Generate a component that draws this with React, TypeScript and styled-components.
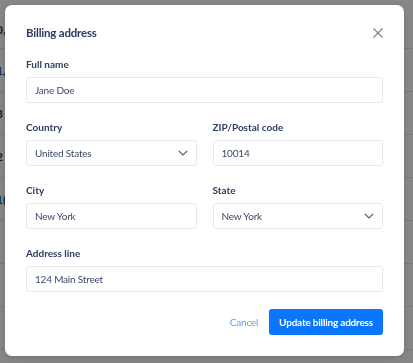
import React from "react";
import styled, { createGlobalStyle } from "styled-components";

const GlobalStyle = createGlobalStyle`
  html, body {
    margin: 0;
    padding: 0;
    background: #ffffff;
    font-family: "Lato", "Liberation Sans", sans-serif;
  }
  * { box-sizing: border-box; }
`;

const Page = styled.div`
  width: 413px;
  height: 363px;
  overflow: hidden;
  background: #ffffff;
`;

const TableRow = styled.div`
  height: 43px;
  display: flex;
  align-items: center;
  border-bottom: 1px solid #e4e6eb;
  margin-left: -4px;
  font-size: 12px;
  font-weight: 700;
  color: #2b3a5c;
  &:first-child {
    height: 49px;
    padding-top: 10px;
  }
`;

const Overlay = styled.div`
  position: fixed;
  inset: 0;
  background: rgba(0, 0, 0, 0.47);
  padding: 5px 9px 0 5px;
`;

const Modal = styled.div`
  width: 399px;
  background: #ffffff;
  border-radius: 7px;
  padding: 18px 21px 21px 21px;
  box-shadow: 0 2px 8px rgba(0, 0, 0, 0.15);
`;

const Header = styled.div`
  display: flex;
  justify-content: space-between;
  align-items: center;
  height: 20px;
  margin-bottom: 12px;
`;

const Title = styled.h2`
  margin: 0;
  font-size: 11.5px;
  line-height: 20px;
  font-weight: 700;
  letter-spacing: -0.2px;
  color: #2b3b5e;
`;

const CloseButton = styled.button`
  border: none;
  background: none;
  padding: 0;
  width: 10px;
  height: 10px;
  display: flex;
  align-items: center;
  justify-content: center;
  cursor: pointer;
`;

const Form = styled.div`
  display: grid;
  grid-template-columns: 1fr 1fr;
  column-gap: 16px;
  row-gap: 15px;
`;

const Field = styled.label<{ $wide?: boolean }>`
  display: flex;
  flex-direction: column;
  gap: 4px;
  grid-column: ${(p) => (p.$wide ? "1 / -1" : "auto")};
`;

const Label = styled.span`
  font-size: 10px;
  line-height: 18px;
  font-weight: 700;
  color: #2c3d5f;
`;

const Box = styled.div`
  height: 26px;
  border: 1px solid #e7e9ee;
  border-radius: 3px;
  padding: 0 8px;
  display: flex;
  align-items: center;
  justify-content: space-between;
  font-size: 10px;
  letter-spacing: -0.2px;
  color: #3b4969;
`;

const Actions = styled.div`
  display: flex;
  justify-content: flex-end;
  align-items: center;
  gap: 11px;
  margin-top: 17px;
`;

const CancelButton = styled.button`
  border: none;
  background: none;
  padding: 0;
  font-family: inherit;
  font-size: 10px;
  letter-spacing: -0.2px;
  color: #5c9bf2;
  cursor: pointer;
`;

const PrimaryButton = styled.button`
  height: 26px;
  border: none;
  border-radius: 3px;
  background: #0a75ff;
  color: #ffffff;
  font-family: inherit;
  font-size: 10px;
  font-weight: 700;
  letter-spacing: -0.2px;
  padding: 0 10px;
  cursor: pointer;
`;

const Chevron = () => (
  <svg width="10" height="6" viewBox="0 0 10 6" fill="none">
    <path d="M0.8 0.8L5 5L9.2 0.8" stroke="#4b5a78" strokeWidth="1.2" />
  </svg>
);

const rows = ["0,", "1,", "3", "2", "1(", "", "", ""];

export default function App() {
  return (
    <Page>
      <GlobalStyle />
      {rows.map((r, i) => (
        <TableRow key={i}>{r}</TableRow>
      ))}
      <Overlay>
        <Modal>
          <Header>
            <Title>Billing address</Title>
            <CloseButton aria-label="Close">
              <svg width="10" height="10" viewBox="0 0 10 10">
                <path d="M0.5 0.5L9.5 9.5M9.5 0.5L0.5 9.5" stroke="#8a8a8a" strokeWidth="1.4" />
              </svg>
            </CloseButton>
          </Header>
          <Form>
            <Field $wide>
              <Label>Full name</Label>
              <Box>Jane Doe</Box>
            </Field>
            <Field>
              <Label>Country</Label>
              <Box>
                United States
                <Chevron />
              </Box>
            </Field>
            <Field>
              <Label>ZIP/Postal code</Label>
              <Box>10014</Box>
            </Field>
            <Field>
              <Label>City</Label>
              <Box>New York</Box>
            </Field>
            <Field>
              <Label>State</Label>
              <Box>
                New York
                <Chevron />
              </Box>
            </Field>
            <Field $wide>
              <Label>Address line</Label>
              <Box>124 Main Street</Box>
            </Field>
          </Form>
          <Actions>
            <CancelButton>Cancel</CancelButton>
            <PrimaryButton>Update billing address</PrimaryButton>
          </Actions>
        </Modal>
      </Overlay>
    </Page>
  );
}
